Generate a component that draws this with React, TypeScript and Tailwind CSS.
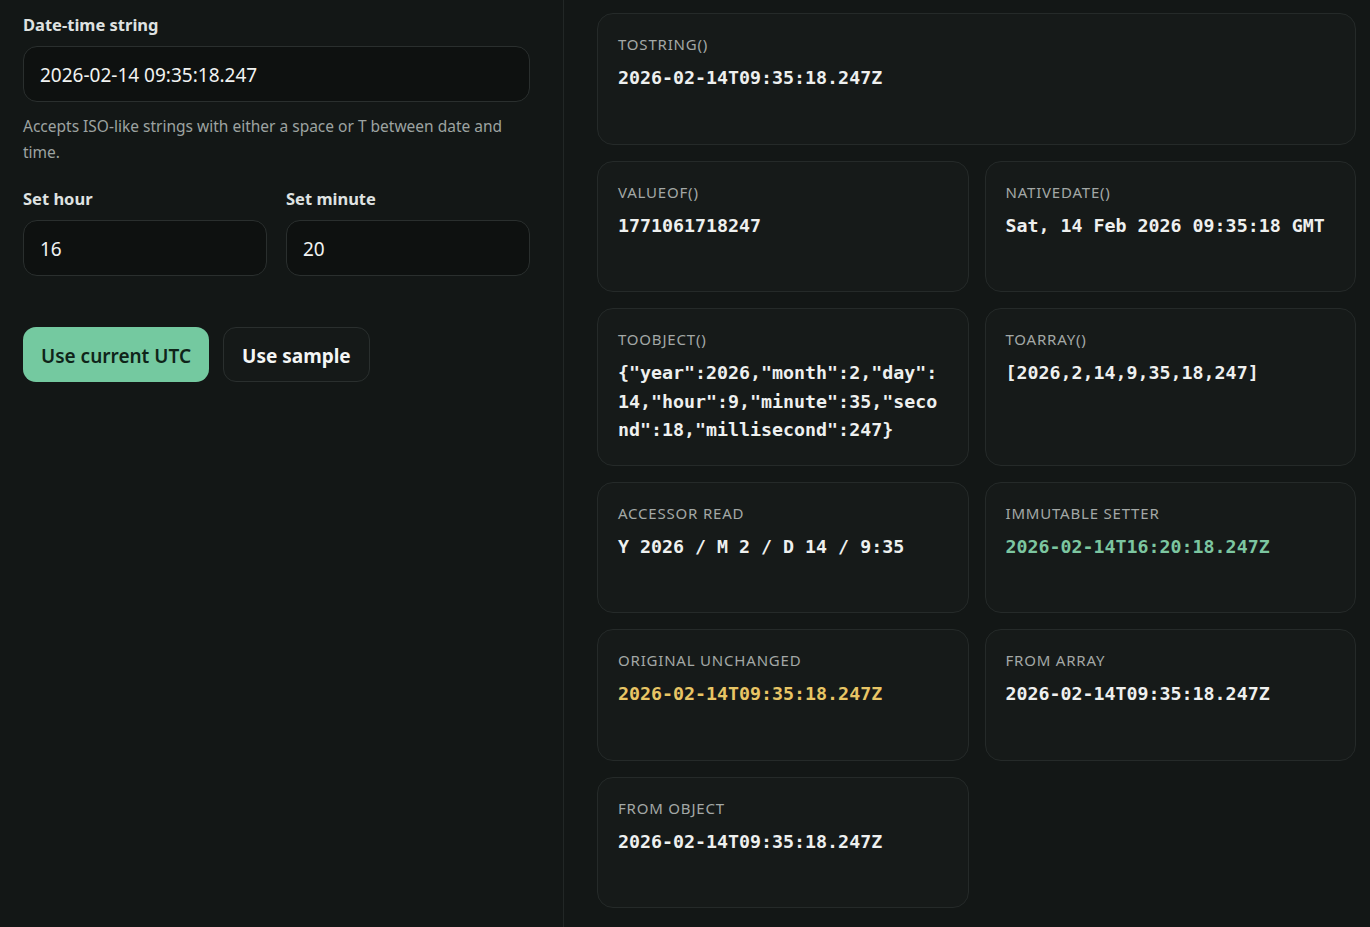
import React from "react";

const sans = { fontFamily: '"Noto Sans", "Open Sans", sans-serif' };

function Card({ label, value, color }: { label: string; value: string; color?: string }) {
  return (
    <div className="min-h-[131.5px] rounded-[16px] border border-[#252a29] bg-[#161a19] pl-[20px] pr-[21px] pt-[20px] pb-[20px]">
      <div className="text-[15px] leading-[20px] tracking-[0.8px] text-[#a3a8a6] uppercase" style={sans}>
        {label}
      </div>
      <div
        className={`mt-[10px] text-[18.3px] font-bold leading-[28.5px] break-all ${color ?? "text-[#eef0ef]"}`}
        style={{ fontFamily: '"DejaVu Sans Mono", "Liberation Mono", monospace' }}
      >
        {value}
      </div>
    </div>
  );
}

export default function App() {
  return (
    <div className="flex h-[927px] w-[1370px] overflow-hidden bg-[#131716] text-[#eef0ef]" style={sans}>
      <div className="w-[564px] shrink-0 border-r border-[#222726] pl-[23px] pr-[33px] pt-[13px]">
        <div className="text-[16.5px] font-bold leading-[24px] text-[#dfe2e1]">Date-time string</div>
        <div className="mt-[9px] flex h-[56px] items-center rounded-[14px] border border-[#2a2f2e] bg-[#0e1110] px-[16px] pt-[3px] text-[19px] text-[#f1f3f2]">
          2026-02-14 09:35:18.247
        </div>
        <div className="mt-[11px] text-[15.5px] leading-[26px] text-[#9da3a1]">
          Accepts ISO-like strings with either a space or T between date and time.
        </div>
        <div className="mt-[22px] grid grid-cols-2 gap-[19px]">
          <div>
            <div className="text-[16.5px] font-bold leading-[24px] text-[#dfe2e1]">Set hour</div>
            <div className="mt-[9px] flex h-[56px] items-center rounded-[14px] border border-[#2a2f2e] bg-[#0e1110] px-[16px] pt-[3px] text-[19px] text-[#f1f3f2]">
              16
            </div>
          </div>
          <div>
            <div className="text-[16.5px] font-bold leading-[24px] text-[#dfe2e1]">Set minute</div>
            <div className="mt-[9px] flex h-[56px] items-center rounded-[14px] border border-[#2a2f2e] bg-[#0e1110] px-[16px] pt-[3px] text-[19px] text-[#f1f3f2]">
              20
            </div>
          </div>
        </div>
        <div className="mt-[51px] flex gap-[14px]">
          <div className="flex h-[55px] items-center rounded-[13px] bg-[#74c9a0] px-[18px] pt-[3px] text-[19px] font-semibold text-[#0f2419]">
            Use current UTC
          </div>
          <div className="flex h-[55px] items-center rounded-[13px] border border-[#2a2f2e] bg-[#151918] px-[18px] pt-[3px] text-[19px] font-bold text-[#f4f6f5]">
            Use sample
          </div>
        </div>
      </div>
      <div className="flex-1 pl-[33px] pr-[14px] pt-[13px]">
        <div className="grid grid-cols-2 gap-x-[16px] gap-y-[16px]">
          <div className="col-span-2">
            <Card label="toString()" value="2026-02-14T09:35:18.247Z" />
          </div>
          <Card label="valueOf()" value="1771061718247" />
          <Card label="nativeDate()" value="Sat, 14 Feb 2026 09:35:18 GMT" />
          <Card
            label="toObject()"
            value={'{"year":2026,"month":2,"day":14,"hour":9,"minute":35,"second":18,"millisecond":247}'}
          />
          <Card label="toArray()" value="[2026,2,14,9,35,18,247]" />
          <Card label="Accessor read" value="Y 2026 / M 2 / D 14 / 9:35" />
          <Card label="Immutable setter" value="2026-02-14T16:20:18.247Z" color="text-[#7cc6a0]" />
          <Card label="Original unchanged" value="2026-02-14T09:35:18.247Z" color="text-[#e8c565]" />
          <Card label="From array" value="2026-02-14T09:35:18.247Z" />
          <Card label="From object" value="2026-02-14T09:35:18.247Z" />
        </div>
      </div>
    </div>
  );
}
